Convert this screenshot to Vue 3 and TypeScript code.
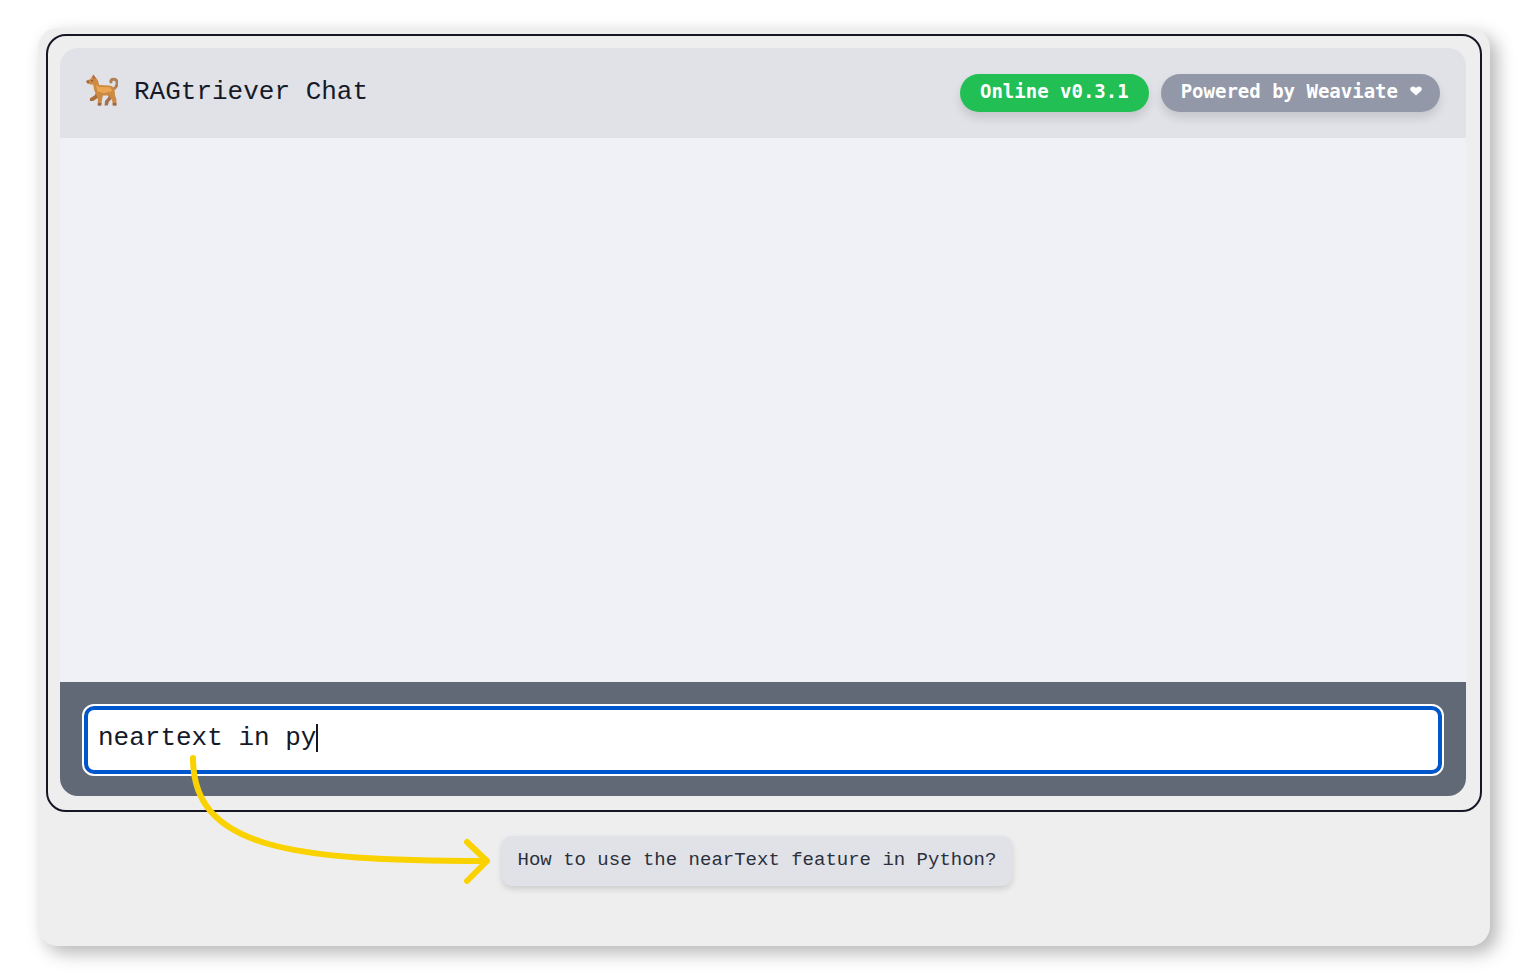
<script setup lang="ts">
import { computed, ref } from 'vue'

const title = 'RAGtriever Chat'
const version = 'v0.3.1'
const query = ref('neartext in py')
const suggestions = ref(['How to use the nearText feature in Python?'])

const caretOffset = computed(() => ({ left: `${query.value.length}ch` }))

function applySuggestion(text: string) {
  query.value = text
}
</script>

<template>
  <main class="page">
    <div class="card">
      <section class="frame">
        <div class="chat">
          <header class="chat-header">
            <svg class="dog" viewBox="0 0 32 32" aria-hidden="true">
              <path d="M26 16C32.500 13 32.500 5.500 28 5.200C25.500 5 24.500 6.500 25 8" fill="none" stroke="#b08058" stroke-width="3" stroke-linecap="round" />
              <path d="M11 17L8.500 21.500L4 24.300L3.800 27H7.200L12.500 23.500L17 19Z" fill="#a9703f" />
              <path d="M21 18L22.500 23L19 27L18.500 31.500H21.800L22.800 28L27 23Z" fill="#a07050" />
              <path d="M7.200 0.500L9.800 3.600L12 6.500L13.200 11L23 11.400C26.500 11.600 28.600 14 28.600 17L29.200 22L30.400 25V31.500H26.800L26.200 26.500L23 21.600L17 21.400L16 25.500L15.200 31.500H11.700L11.800 25L9.800 19.500C8 17 7.600 13.500 7.400 10.800L4.400 10.500L1 9.200L0.400 6.800L4.500 5Z" fill="#cd8a43" />
              <path d="M10 11L13 13L24 13.200L26.500 17L18 19L11.500 17.500Z" fill="#eba653" />
              <path d="M7 0.500L9.500 4L7.400 5.200Z" fill="#ad6252" />
              <path d="M0.400 6.800L3 6.400L3.200 9L1 9.200ZM12 29H15.500L15.200 31.500H11.700ZM26.800 29H30.400V31.500H26.800Z" fill="#98664c" />
              <circle cx="6" cy="6.700" r="0.800" fill="#59402f" />
            </svg>
            <h1 class="title">{{ title }}</h1>
            <span class="badge online">Online {{ version }}</span>
            <span class="badge powered">
              Powered by Weaviate
              <svg class="heart" viewBox="0 0 12 10" aria-hidden="true">
                <path d="M6 9.500L1 5C-1 2.600 1 0.300 3.200 0.500C4.600 0.600 5.500 1.400 6 2.200C6.500 1.400 7.400 0.600 8.800 0.500C11 0.300 13 2.600 11 5Z" fill="currentColor" />
              </svg>
            </span>
          </header>
          <div class="messages"></div>
          <form class="composer" @submit.prevent>
            <div class="field">
              <input v-model="query" class="query" type="text" aria-label="Message" autocomplete="off" spellcheck="false" />
              <span class="caret-track" aria-hidden="true"><span class="caret" :style="caretOffset"></span></span>
            </div>
          </form>
        </div>
      </section>
      <div class="suggestions">
        <button v-for="item in suggestions" :key="item" class="suggestion" type="button" @click="applySuggestion(item)">
          {{ item }}
        </button>
      </div>
      <svg class="arrow" viewBox="0 0 304 132" aria-hidden="true">
        <path d="M5 5C5 95 102 108 297 108M279 89L299 108L279 128" />
      </svg>
    </div>
  </main>
</template>

<style>
body {
  margin: 0;
  background: #fff;
}
</style>

<style scoped>
.page {
  box-sizing: border-box;
  min-height: 100vh;
  display: flex;
  padding: 28px 38px;
  font-family: "Liberation Mono", monospace;
  color: #151a29;
}

.card {
  position: relative;
  flex: 1;
  display: flex;
  flex-direction: column;
  min-width: 0;
  padding: 6px 8px 0;
  border-radius: 20px;
  background: #eee;
  box-shadow: 7px 7px 18px rgba(0, 0, 0, 0.29);
}

.frame {
  flex: 1;
  display: flex;
  padding: 12px 14px 14px 12px;
  border: 2px solid #151725;
  border-radius: 20px;
}

.chat {
  flex: 1;
  display: flex;
  flex-direction: column;
  min-width: 0;
  overflow: hidden;
  border-radius: 18px;
  background: #f0f1f6;
}

.chat-header {
  display: flex;
  align-items: center;
  gap: 12px;
  padding: 26px;
  background: #e1e2e7;
}

.dog {
  width: 32px;
  height: 32px;
  margin-bottom: 6px;
}

.title {
  flex: 1;
  margin: 0 0 2px 4px;
  font-size: 26px;
  font-weight: 400;
  line-height: 34px;
}

.badge {
  box-sizing: border-box;
  display: flex;
  align-items: center;
  justify-content: center;
  gap: 12px;
  height: 38px;
  padding: 0 20px 4px;
  border-radius: 19px;
  color: #fff;
  font-family: "DejaVu Sans Mono", monospace;
  font-size: 19px;
  font-weight: 700;
  white-space: nowrap;
  box-shadow: 0 6px 10px rgba(0, 0, 0, 0.12);
}

.online {
  background: #22bf55;
}

.powered {
  padding-right: 18px;
  background: #9298a7;
}

.heart {
  width: 12px;
  height: 10px;
}

.messages {
  flex: 1;
}

.composer {
  padding: 24px 24px 22px;
  background: #626976;
}

.field {
  position: relative;
  font-size: 26px;
}

.query {
  box-sizing: border-box;
  display: block;
  width: 100%;
  height: 68px;
  padding: 0 10px 4px;
  border: 4px solid #0056cc;
  border-radius: 10px;
  outline: 2px solid #fff;
  background: #fff;
  color: inherit;
  caret-color: transparent;
  font: inherit;
}

.caret-track {
  position: absolute;
  top: 18px;
  left: 14px;
  pointer-events: none;
}

.caret {
  position: absolute;
  top: 0;
  width: 2px;
  height: 28px;
  background: #151725;
}

.suggestions {
  display: flex;
  justify-content: center;
  padding: 24px 14px 60px 0;
}

.suggestion {
  height: 50px;
  padding: 0 16px 2px;
  border: 0;
  border-radius: 10px;
  background: #e1e2e7;
  color: #2b303d;
  font: 19px "Liberation Mono", monospace;
  white-space: nowrap;
  cursor: pointer;
  box-shadow: 0 3px 6px rgba(0, 0, 0, 0.14);
}

.arrow {
  position: absolute;
  bottom: 61px;
  left: 150px;
  width: 304px;
  height: 132px;
  pointer-events: none;
}

.arrow path {
  fill: none;
  stroke: #fad200;
  stroke-width: 6px;
  stroke-linecap: round;
  stroke-linejoin: round;
}
</style>
